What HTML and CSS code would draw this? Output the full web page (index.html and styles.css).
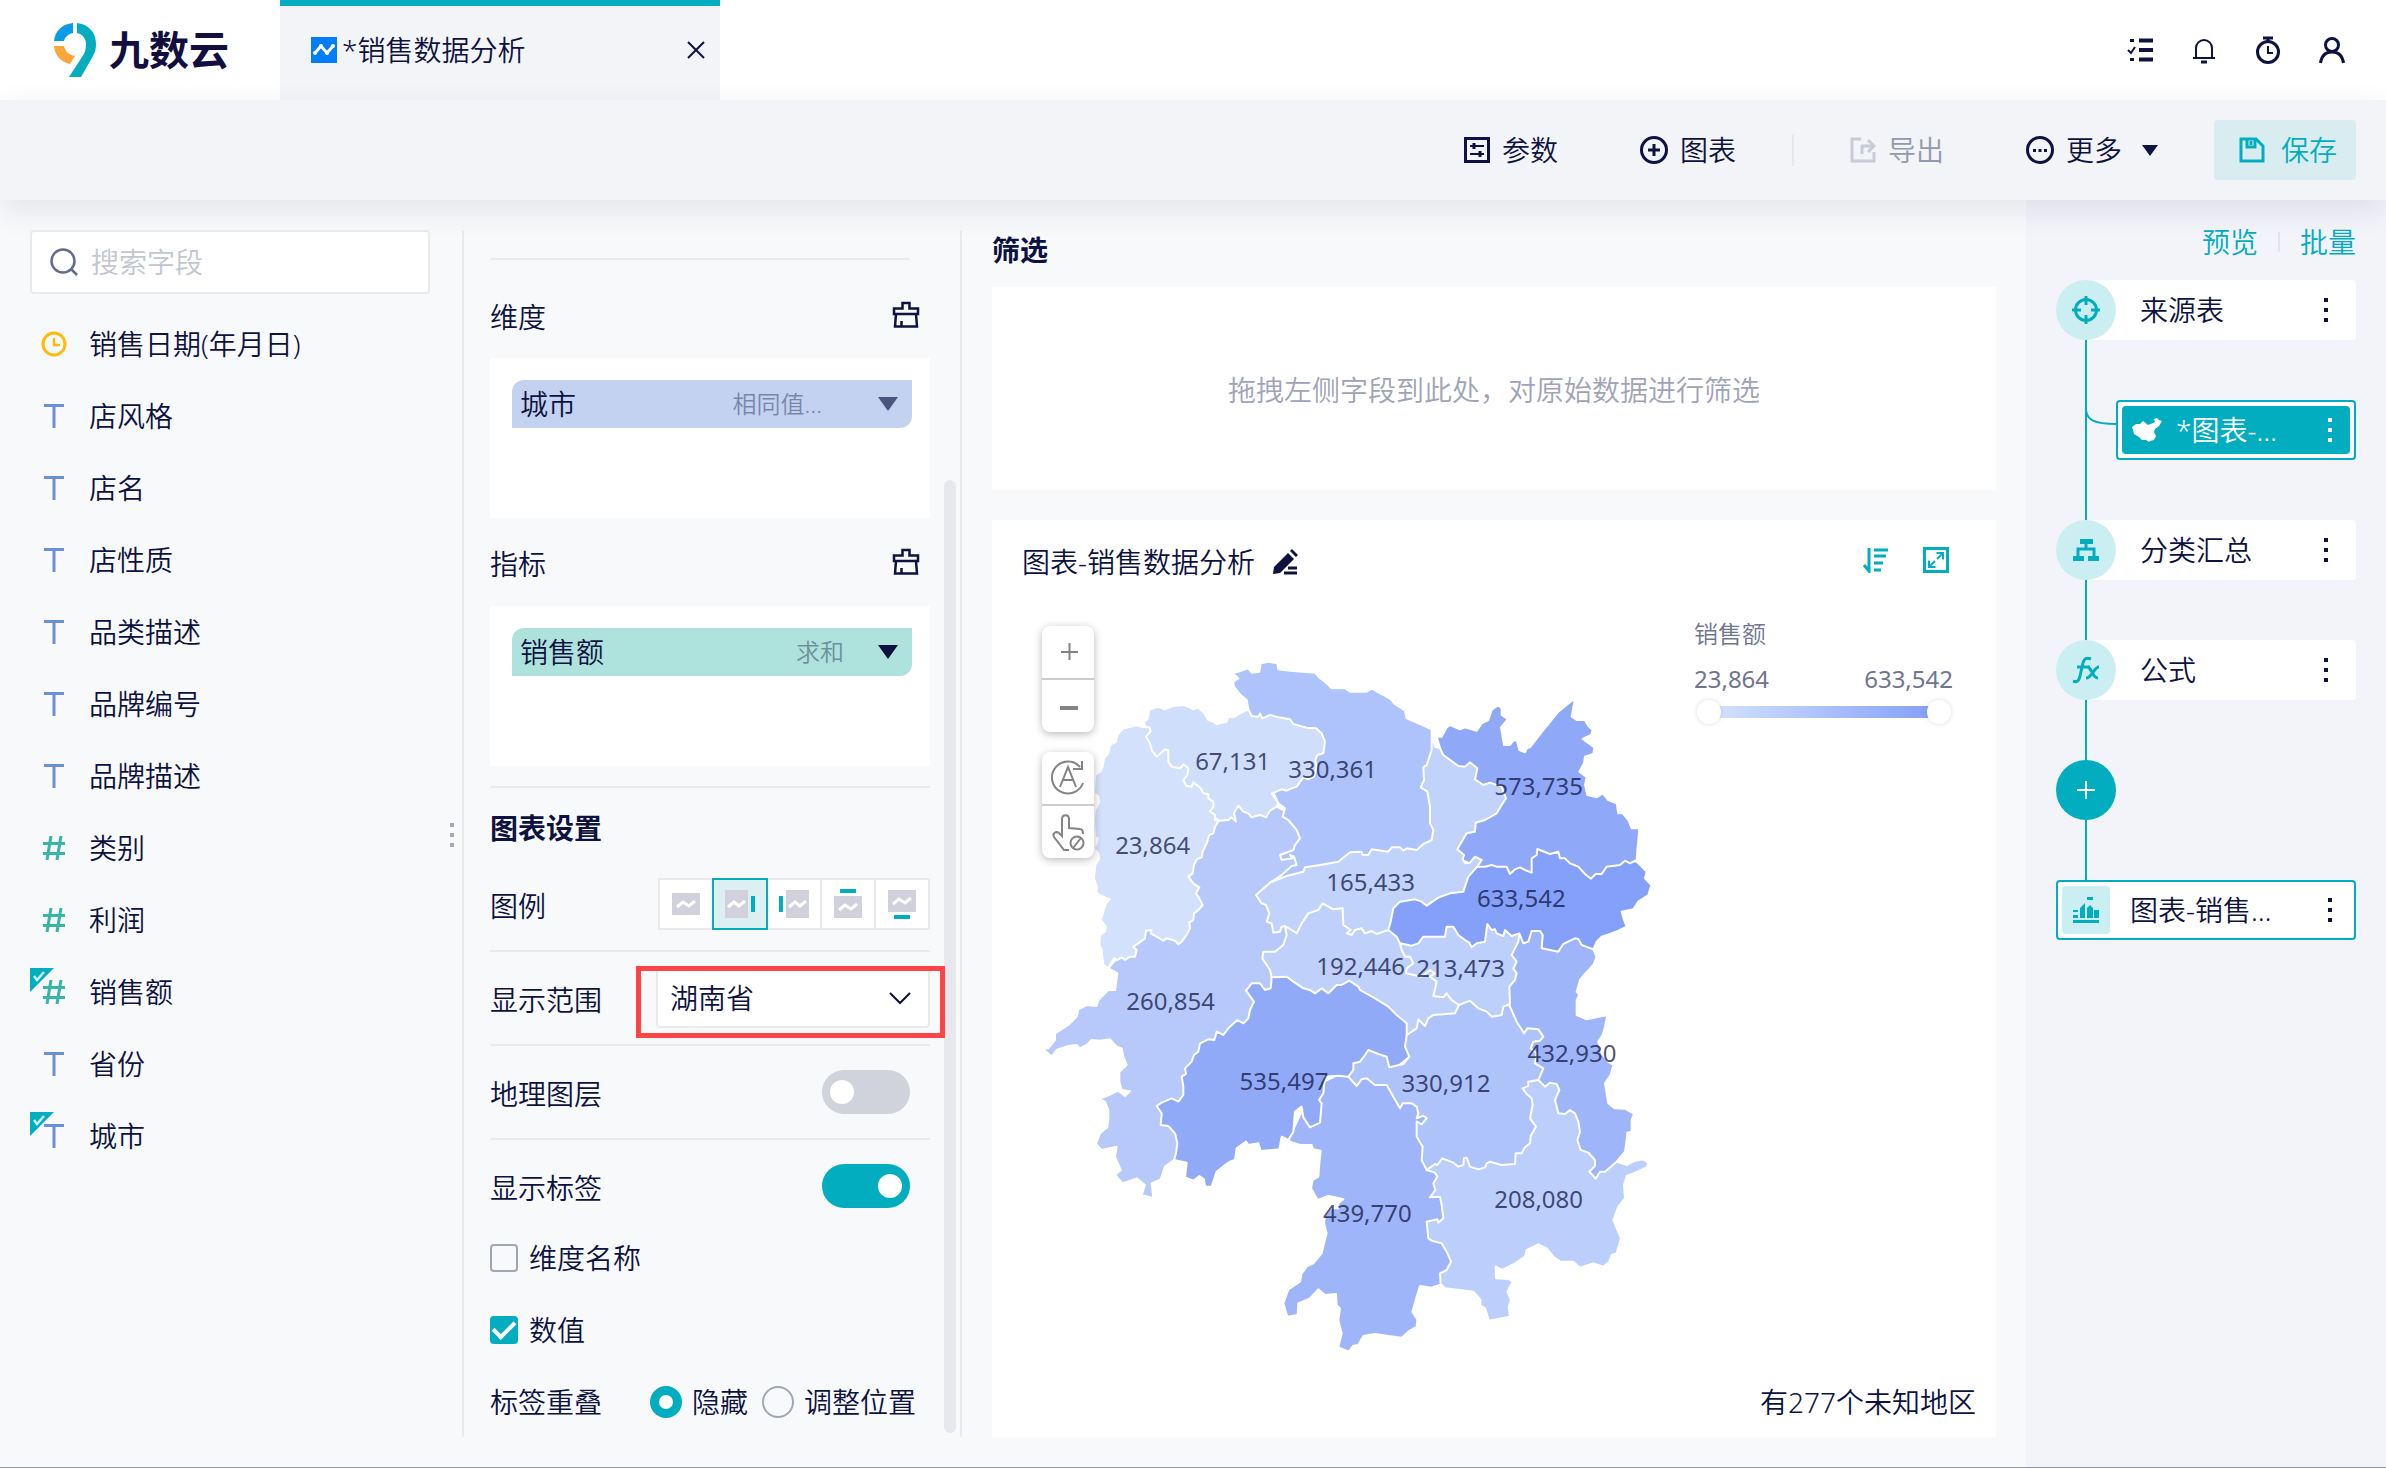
FILE: index.html
```html
<!DOCTYPE html>
<html lang="zh-CN">
<head>
<meta charset="utf-8">
<title>销售数据分析</title>
<link rel="stylesheet" href="styles.css">
</head>
<body>
<header class="topbar">
  <a class="logo" href="#" aria-label="九数云">
    <svg width="44" height="56" viewBox="0 0 44 56" aria-hidden="true">
      <path d="M1 19C2 9 9 2 20 1v10c-5 1-8 4-9 8z" fill="#0a9be6"/>
      <path d="M24 1c11 1 19 9 19 21 0 5-1 8-3 12L28 55H16l13-20c3-4 4-8 4-13 0-6-4-10-9-11z" fill="#02adbf"/>
      <path d="M1 24h10c1 5 5 9 11 10l-5 8C8 40 2 34 1 24z" fill="#fba63a"/>
    </svg>
    <span class="logo-text">九数云</span>
  </a>
  <div class="tab">
    <svg width="26" height="26" viewBox="0 0 26 26" aria-hidden="true"><path d="M0 0h26v26H0z" fill="#027df8"/><path d="M4 16l6-7 6 7 6-7" fill="none" stroke="#fff" stroke-width="3"/><circle cx="4" cy="16" r="2" fill="#fff"/><circle cx="10" cy="9" r="2" fill="#fff"/><circle cx="16" cy="16" r="2" fill="#fff"/><circle cx="22" cy="9" r="2" fill="#fff"/></svg>
    <span class="tab-title">*销售数据分析</span>
    <button class="icon-btn" aria-label="关闭"><svg width="20" height="20" viewBox="0 0 20 20"><path d="M2 2l16 16M18 2L2 18" class="ln"/></svg></button>
  </div>
  <nav class="top-icons">
    <button class="icon-btn" aria-label="任务"><svg width="28" height="28" viewBox="0 0 28 28"><path d="M13 4.500h14M13 14h14M13 23.500h14" class="ln w4"/><path d="M2 14l3 3 4-6" class="ln"/><path d="M4 4.500h4M4 23.500h4" class="ln w3"/></svg></button>
    <button class="icon-btn" aria-label="通知"><svg width="28" height="28" viewBox="0 0 28 28"><path d="M3 22h22M6 22V12a8 8 0 0 1 16 0v10" class="ln"/><path d="M11 26h6" class="ln w3"/></svg></button>
    <button class="icon-btn" aria-label="计时"><svg width="28" height="28" viewBox="0 0 28 28"><circle cx="14" cy="16" r="10.500" class="ln w3"/><path d="M14 10v7h5" class="ln"/><path d="M9 2h10" class="ln w3"/><path d="M14 2v4" class="ln w3"/></svg></button>
    <button class="icon-btn" aria-label="用户"><svg width="28" height="28" viewBox="0 0 28 28"><circle cx="14" cy="9" r="6.500" class="ln w3"/><path d="M2.500 27c1-7 5-11 11.500-11s10.500 4 11.500 11" class="ln w3"/></svg></button>
  </nav>
</header>

<div class="toolbar">
  <button class="tool"><svg width="26" height="26" viewBox="0 0 26 26"><path d="M1.500 1.500h23v23h-23z" class="ln w3"/><path d="M6 9h14M6 17h14" class="ln"/><path d="M10 6v6M16 14v6" class="ln w3"/></svg>参数</button>
  <button class="tool"><svg width="28" height="28" viewBox="0 0 28 28"><circle cx="14" cy="14" r="12.500" class="ln w3"/><path d="M14 8v12M8 14h12" class="ln w3"/></svg>图表</button>
  <span class="tool-sep"></span>
  <button class="tool disabled" disabled><svg width="26" height="26" viewBox="0 0 26 26"><path d="M11 2H2v22h22v-9" class="ln w3 pale"/><path d="M12 17V9h10" class="ln w3 pale"/><path d="M18 3l6 6-6 6" class="ln w3 pale"/></svg>导出</button>
  <button class="tool"><svg width="28" height="28" viewBox="0 0 28 28"><circle cx="14" cy="14" r="12.500" class="ln w3"/><path d="M7 13h3v3H7zM12.500 13h3v3h-3zM18 13h3v3h-3z" fill="#0d1240"/></svg>更多<i class="caret caret-small"></i></button>
  <button class="save"><svg width="26" height="26" viewBox="0 0 26 26"><path d="M2 2h15l7 7v15H2z" class="ln w3 teal"/><path d="M8 2v8h8V2M12 4v4" class="ln w3 teal"/></svg>保存</button>
</div>

<main class="main">
  <section class="fields">
    <label class="search"><svg width="28" height="28" viewBox="0 0 28 28"><circle cx="13" cy="13" r="11.500" fill="none" stroke="#636c8c" stroke-width="2.500"/><path d="M21 21l6 6" stroke="#636c8c" stroke-width="2.500"/></svg><input type="text" placeholder="搜索字段" aria-label="搜索字段"></label>
    <ul class="field-list">
      <li><svg class="f-icon" viewBox="0 0 26 26"><circle cx="13" cy="13" r="11" fill="none" stroke="#ffbb0b" stroke-width="3"/><path d="M13 7v7h6" fill="none" stroke="#ffbb0b" stroke-width="2.500"/></svg>销售日期(年月日)</li>
      <li><svg class="f-icon" viewBox="0 0 26 26"><use href="#text-type"/></svg>店风格</li>
      <li><svg class="f-icon" viewBox="0 0 26 26"><use href="#text-type"/></svg>店名</li>
      <li><svg class="f-icon" viewBox="0 0 26 26"><use href="#text-type"/></svg>店性质</li>
      <li><svg class="f-icon" viewBox="0 0 26 26"><use href="#text-type"/></svg>品类描述</li>
      <li><svg class="f-icon" viewBox="0 0 26 26"><use href="#text-type"/></svg>品牌编号</li>
      <li><svg class="f-icon" viewBox="0 0 26 26"><use href="#text-type"/></svg>品牌描述</li>
      <li><svg class="f-icon" viewBox="0 0 26 26"><use href="#num-type"/></svg>类别</li>
      <li><svg class="f-icon" viewBox="0 0 26 26"><use href="#num-type"/></svg>利润</li>
      <li class="used"><svg class="f-icon" viewBox="0 0 26 26"><use href="#num-type"/></svg>销售额<svg class="flag" viewBox="0 0 24 24"><use href="#used-flag"/></svg></li>
      <li><svg class="f-icon" viewBox="0 0 26 26"><use href="#text-type"/></svg>省份</li>
      <li class="used"><svg class="f-icon" viewBox="0 0 26 26"><use href="#text-type"/></svg>城市<svg class="flag" viewBox="0 0 24 24"><use href="#used-flag"/></svg></li>
    </ul>
    <span class="drag-handle"><i></i><i></i><i></i></span>
  </section>

  <section class="config">
    <hr class="rule first">
    <div class="drop-head"><span>维度</span><button class="icon-btn" aria-label="清空维度"><svg width="28" height="28" viewBox="0 0 28 28"><use href="#brush"/></svg></button></div>
    <div class="drop-box"><div class="pill blue"><span>城市</span><small>相同值…</small><i class="caret"></i></div></div>
    <div class="drop-head"><span>指标</span><button class="icon-btn" aria-label="清空指标"><svg width="28" height="28" viewBox="0 0 28 28"><use href="#brush"/></svg></button></div>
    <div class="drop-box"><div class="pill green"><span>销售额</span><small>求和</small><i class="caret"></i></div></div>
    <hr class="rule">
    <h2 class="config-title">图表设置</h2>
    <div class="setting"><span class="setting-name">图例</span>
      <div class="legend-pos">
        <button aria-label="无图例"><svg width="32" height="30" viewBox="0 0 32 30"><path d="M2 4h28v22H2z" class="thumb"/><path d="M7 18l6-5 6 4 6-5" class="zig"/></svg></button>
        <button class="on" aria-label="右侧"><svg width="32" height="30" viewBox="0 0 32 30"><path d="M1 1h23v28H1z" class="thumb"/><path d="M4 18l6-5 5 4 6-5" class="zig"/><path d="M27 7h4v16h-4z" fill="#02adbf"/></svg></button>
        <button aria-label="左侧"><svg width="32" height="30" viewBox="0 0 32 30"><path d="M8 1h23v28H8z" class="thumb"/><path d="M11 18l6-5 5 4 6-5" class="zig"/><path d="M1 7h4v16H1z" fill="#02adbf"/></svg></button>
        <button aria-label="上方"><svg width="32" height="30" viewBox="0 0 32 30"><path d="M2 7h28v22H2z" class="thumb"/><path d="M7 21l6-5 6 4 6-5" class="zig"/><path d="M8 0h16v4H8z" fill="#02adbf"/></svg></button>
        <button aria-label="下方"><svg width="32" height="30" viewBox="0 0 32 30"><path d="M2 1h28v22H2z" class="thumb"/><path d="M7 15l6-5 6 4 6-5" class="zig"/><path d="M8 26h16v4H8z" fill="#02adbf"/></svg></button>
      </div>
    </div>
    <div class="setting"><label class="setting-name" for="range">显示范围</label>
      <div class="range-wrap"><select id="range"><option>湖南省</option></select><svg class="chevron" width="22" height="14" viewBox="0 0 22 14"><path d="M1 2l10 10L21 2" class="ln"/></svg></div>
    </div>
    <div class="setting"><label class="setting-name" for="geo">地理图层</label><input class="switch" type="checkbox" id="geo"></div>
    <div class="setting last"><label class="setting-name" for="labels">显示标签</label><input class="switch" type="checkbox" id="labels" checked></div>
    <div class="options">
      <label class="option"><input class="tick" type="checkbox">维度名称</label>
      <label class="option"><input class="tick" type="checkbox" checked>数值</label>
      <div class="option overlap"><span class="overlap-name">标签重叠</span><label class="choice"><input class="dot" type="radio" name="overlap" checked>隐藏</label><label class="choice"><input class="dot" type="radio" name="overlap">调整位置</label></div>
    </div>
    <span class="scroll-thumb"></span>
  </section>

  <section class="work">
    <h2 class="work-title">筛选</h2>
    <div class="filter-drop">拖拽左侧字段到此处，对原始数据进行筛选</div>
    <div class="chart-card">
      <div class="chart-head">
        <span>图表-销售数据分析</span>
        <button class="icon-btn" aria-label="重命名"><svg width="28" height="28" viewBox="0 0 28 28"><path d="M3 19L17 5l6 6L9 25 2 26zM19 3l2-2 6 6-2 2z" fill="#0d1240"/><path d="M17 20h9M13 25h13" class="ln w3"/></svg></button>
        <div class="chart-tools">
          <button class="icon-btn" aria-label="排序"><svg width="26" height="26" viewBox="0 0 26 26"><path d="M6 1v23l-5-6" class="ln w3 teal"/><path d="M11 3h14M11 9h12M11 16h9M11 23h7" class="ln w3 teal"/></svg></button>
          <button class="icon-btn" aria-label="全屏"><svg width="26" height="26" viewBox="0 0 26 26"><path d="M1.500 1.500h23v23h-23z" class="ln w3 teal"/><path d="M13.500 6H20v6.500M20 6l-6 6M12.500 20H6v-6.500M6 20l6-6" class="ln teal"/></svg></button>
        </div>
      </div>
      <div class="chart-body">
        <svg class="map" viewBox="0 0 1920 2220" role="img" aria-label="湖南省销售额地图">
          <g stroke="#fff" stroke-width="6" stroke-linejoin="round">
            <path fill="#b6c9fa" d="M235 1044L262 1060 255 1110 235 1110 205 1140 200 1158 170 1155 145 1168 140 1190 115 1215 75 1240 75 1260 55 1285 38 1287 50 1297 65 1310 80 1290 110 1279 140 1275 150 1285 170 1275 185 1260 210 1262 240 1258 260 1280 275 1285 280 1310 290 1335 268 1355 268 1385 275 1410 300 1414 285 1428 265 1412 230 1428 205 1437 225 1445 235 1470 235 1500 232 1522 210 1540 198 1572 215 1590 260 1580 255 1610 272 1650 255 1665 278 1690 320 1675 345 1695 335 1725 370 1735 365 1690 392 1678 405 1640 432 1620 600 1300 800 1100 800 900 820 700 820 600 700 540 560 560 450 800z"/>
            <path fill="#bccefb" d="M1760 1625L1790 1635 1815 1622 1840 1618 1855 1628 1850 1642 1810 1660 1790 1668 1782 1695 1785 1735 1765 1760 1750 1800 1773 1855 1760 1900 1745 1905 1738 1925 1720 1940 1690 1930 1650 1943 1630 1925 1590 1925 1572 1912 1550 1885 1525 1873 1490 1890 1485 1910 1455 1930 1417 1950 1397 1940 1398 1975 1435 1977 1448 1985 1432 2015 1443 2040 1436 2062 1440 2090 1377 2102 1365 2065 1350 2055 1352 2040 1330 2015 1270 2008 1245 2005 1232 1993 1200 1950 1150 1750 1190 1650 1250 1560 1450 1560 1440 1400 1495 1370 1525 1380 1600 1370 1700 1550z"/>
            <path fill="#9fb5fa" d="M775 1560L780 1565 810 1575 845 1575 850 1588 872 1592 868 1630 865 1670 848 1680 843 1705 863 1740 895 1728 915 1732 940 1738 925 1750 925 1765 900 1765 885 1785 882 1810 890 1840 882 1870 875 1900 850 1930 832 1938 815 1960 810 1985 775 2008 760 2050 772 2090 803 2085 805 2050 840 2035 865 2008 885 2025 918 2022 920 2055 930 2065 925 2100 935 2140 925 2182 957 2195 970 2177 985 2175 1000 2148 1035 2142 1075 2148 1115 2153 1135 2135 1160 2120 1162 2098 1147 2075 1160 2030 1170 1998 1205 2003 1232 1993 1230 1960 1250 1950 1263 1925 1250 1895 1235 1870 1205 1862 1195 1855 1190 1805 1222 1798 1225 1808 1240 1795 1235 1755 1230 1730 1200 1732 1216 1710 1210 1690 1222 1670 1215 1658 1190 1650 1220 1500 1190 1450 1100 1380 955 1350 850 1400z"/>
            <path fill="#91aaf8" d="M725 1072L722 1105 705 1110 690 1090 665 1090 648 1112 672 1145 660 1170 655 1195 640 1210 622 1200 595 1225 580 1245 560 1235 553 1260 535 1258 510 1270 505 1295 492 1305 485 1325 465 1345 468 1362 455 1370 460 1400 460 1425 445 1445 425 1435 395 1448 380 1458 395 1480 392 1515 415 1518 435 1540 442 1570 438 1600 432 1620 470 1628 465 1672 490 1682 508 1668 522 1678 525 1700 545 1700 560 1655 585 1635 600 1625 615 1620 620 1585 648 1565 655 1575 685 1570 692 1593 748 1588 755 1550 775 1560 790 1535 795 1475 815 1460 820 1492 840 1522 870 1508 875 1450 867 1440 880 1420 885 1370 925 1367 955 1370 1080 1360 1150 1300 1140 1230 1100 1150 958 1040 760 1040z"/>
            <path fill="#afc3fb" d="M1130 1245L1125 1280 1138 1310 1120 1332 1078 1342 1070 1310 1045 1302 1015 1290 1003 1308 990 1325 970 1330 970 1350 955 1370 980 1398 995 1378 1010 1375 1035 1395 1070 1395 1090 1430 1110 1465 1118 1450 1145 1450 1160 1460 1165 1480 1160 1495 1180 1487 1190 1495 1175 1513 1160 1505 1160 1550 1178 1580 1175 1620 1190 1650 1215 1632 1222 1635 1237 1615 1270 1628 1285 1640 1300 1635 1302 1615 1310 1613 1320 1640 1345 1648 1365 1642 1370 1630 1380 1625 1415 1635 1455 1632 1457 1600 1475 1600 1485 1582 1500 1570 1502 1548 1518 1520 1500 1495 1508 1455 1505 1435 1490 1422 1478 1405 1495 1398 1495 1385 1525 1380 1560 1340 1560 1250 1440 1160 1440 1120 1280 1130 1150 1180z"/>
            <path fill="#9fb5fa" d="M1690 988L1700 1010 1690 1035 1665 1062 1650 1080 1640 1115 1648 1125 1640 1140 1640 1185 1670 1198 1732 1185 1725 1220 1718 1245 1705 1265 1715 1300 1735 1325 1750 1335 1742 1365 1725 1390 1735 1450 1755 1465 1785 1466 1812 1482 1805 1500 1805 1535 1792 1538 1790 1560 1785 1595 1760 1625 1725 1655 1710 1655 1697 1676 1678 1655 1695 1638 1695 1620 1675 1598 1652 1590 1642 1560 1650 1535 1645 1505 1635 1480 1620 1470 1605 1482 1585 1480 1575 1440 1588 1410 1580 1392 1560 1388 1545 1400 1525 1380 1540 1345 1515 1330 1520 1300 1502 1285 1510 1265 1530 1262 1540 1250 1525 1228 1492 1225 1482 1240 1460 1205 1440 1160 1400 1100 1420 940 1500 900 1690 960z"/>
            <path fill="#bdcffb" d="M1468 940L1465 965 1445 1005 1460 1025 1450 1045 1460 1060 1455 1080 1438 1100 1440 1152 1420 1160 1415 1185 1385 1190 1370 1175 1345 1165 1320 1142 1287 1155 1200 1150 1110 1080 1100 1000 1110 940 1250 900 1370 900 1440 910z"/>
            <path fill="#bfd1fb" d="M765 918L770 945 760 975 735 995 700 995 697 1015 720 1050 725 1072 770 1070 790 1085 820 1105 840 1110 855 1120 875 1105 895 1120 920 1095 935 1095 958 1082 985 1100 990 1110 1035 1135 1075 1160 1100 1185 1130 1210 1130 1245 1160 1225 1165 1198 1185 1218 1195 1195 1210 1185 1250 1182 1275 1180 1287 1155 1265 1140 1250 1120 1240 1132 1210 1128 1220 1085 1200 1070 1215 1060 1200 1050 1175 1070 1128 1060 1130 1045 1150 1030 1140 1010 1125 1010 1115 990 1110 970 1080 880 940 820 860 820 790 890z"/>
            <path fill="#84a0f8" d="M1342 740L1522 670 1650 690 1820 725 1850 755 1845 775 1864 795 1855 825 1825 845 1810 868 1775 875 1782 900 1790 920 1765 932 1740 942 1715 950 1700 965 1690 988 1655 975 1645 957 1635 955 1600 972 1585 995 1535 985 1538 945 1530 933 1505 933 1495 965 1480 970 1468 940 1445 948 1425 930 1420 948 1400 940 1395 928 1385 930 1372 912 1365 965 1340 970 1325 982 1318 968 1305 960 1285 945 1270 920 1250 920 1245 950 1180 950 1165 970 1145 977 1110 970 1100 950 1075 930 1060 860 1180 800z"/>
            <path fill="#8fa8f8" d="M1220 350L1235 350 1250 322 1260 315 1290 328 1305 322 1340 332 1355 310 1375 300 1385 270 1405 255 1415 265 1415 285 1430 295 1450 267 1438 292 1413 322 1422 375 1440 375 1450 362 1460 360 1468 390 1485 397 1490 385 1500 382 1540 330 1585 275 1635 235 1625 290 1640 300 1665 300 1675 318 1688 330 1683 345 1658 357 1693 382 1690 402 1665 410 1662 430 1648 455 1670 472 1665 495 1672 525 1700 532 1718 520 1735 540 1760 550 1765 580 1778 580 1795 600 1805 625 1828 625 1825 660 1822 690 1820 720 1800 730 1785 722 1770 735 1730 740 1715 762 1697 762 1683 776 1665 762 1645 740 1620 730 1605 715 1590 715 1585 695 1560 702 1522 687 1520 705 1505 715 1505 758 1485 750 1470 742 1455 748 1440 762 1430 740 1400 740 1385 735 1365 740 1342 740 1250 700 1250 450z"/>
            <path fill="#c1d2fb" d="M1210 358L1215 380 1230 385 1240 405 1285 438 1305 440 1320 427 1342 445 1335 478 1360 495 1380 488 1415 500 1428 535 1415 555 1400 580 1365 600 1337 608 1335 635 1310 640 1282 688 1302 705 1298 718 1305 730 1320 728 1335 710 1355 720 1342 740 1315 770 1308 790 1300 815 1260 820 1225 833 1190 857 1175 845 1155 838 1110 845 1090 865 1082 905 1075 930 1040 942 1025 933 1005 940 995 925 975 930 965 945 950 940 962 930 940 915 938 865 910 868 878 850 865 870 835 880 815 910 800 940 785 930 765 918 755 920 750 935 730 938 725 910 710 905 718 880 708 855 695 850 678 825 720 788 900 700 1150 650 1150 450z"/>
            <path fill="#aec2fb" d="M655 268L650 240 632 225 612 200 610 185 625 175 608 160 635 152 655 145 665 158 688 155 692 130 715 125 742 130 745 148 780 152 855 158 865 170 890 190 905 205 945 205 960 215 1010 215 1025 205 1050 220 1070 230 1085 240 1092 250 1125 272 1130 295 1165 310 1205 328 1205 390 1190 435 1180 442 1182 480 1172 502 1192 515 1200 560 1200 610 1210 630 1205 660 1180 672 1160 690 1130 685 1120 692 1110 682 1085 682 1075 695 1055 692 1025 688 1015 705 998 705 995 695 960 697 925 725 870 735 825 742 820 755 770 768 720 788 755 765 785 738 800 735 792 710 780 705 787 715 755 720 750 705 790 690 795 675 810 655 800 630 775 600 758 590 765 565 745 550 700 450z"/>
            <path fill="#cfdefb" d="M345 318L342 305 352 298 358 270 375 262 390 262 405 268 430 258 460 255 480 262 490 268 505 263 522 278 535 300 550 305 560 313 575 308 590 305 595 290 610 292 630 280 655 268 665 288 685 290 690 280 697 295 720 285 745 292 780 298 790 312 830 323 858 325 875 340 885 365 880 400 862 405 856 420 860 440 852 470 835 478 820 472 800 500 785 505 770 512 755 508 725 520 735 535 745 550 740 560 720 572 708 592 690 585 665 592 655 580 640 575 625 557 612 580 618 605 605 592 595 600 566 602 450 520 335 350z"/>
            <path fill="#d3e1fc" d="M345 322L318 316 295 322 280 325 262 345 258 365 240 375 235 400 222 415 218 440 210 455 195 465 192 520 205 530 208 545 195 570 192 600 195 650 203 655 200 670 190 685 205 700 208 715 196 735 192 775 200 800 200 820 215 828 240 838 228 850 220 875 212 900 228 920 225 935 210 945 208 975 215 990 220 1035 235 1044 252 1015 262 1020 275 1012 285 1020 300 1010 315 1010 320 990 310 980 325 970 345 955 348 932 365 930 362 940 380 950 400 962 410 955 435 962 445 973 455 965 470 945 480 925 478 908 490 900 492 880 505 870 518 855 505 830 498 820 508 802 490 790 475 770 488 760 492 735 500 718 515 712 518 695 530 670 538 645 550 640 555 620 566 602 555 600 555 585 540 575 550 560 550 545 535 535 535 522 520 520 512 505 490 487 485 500 468 497 460 480 472 465 475 445 460 433 450 445 425 440 415 425 415 390 405 388 380 410 365 390 360 370 348 350 362 335 358 322z"/>
          </g>
          <g class="map-labels">
            <text x="608" y="450">67,131</text><text x="908" y="474">330,361</text><text x="1526" y="524">573,735</text>
            <text x="368" y="702">23,864</text><text x="1022" y="812">165,433</text><text x="1474" y="860">633,542</text>
            <text x="992" y="1064">192,446</text><text x="1292" y="1070">213,473</text><text x="422" y="1170">260,854</text>
            <text x="1626" y="1326">432,930</text><text x="762" y="1410">535,497</text><text x="1248" y="1416">330,912</text>
            <text x="1526" y="1764">208,080</text><text x="1012" y="1806">439,770</text>
          </g>
        </svg>
        <div class="map-controls">
          <div class="control-group">
            <button aria-label="放大"><svg width="52" height="52" viewBox="0 0 52 52"><path d="M19 26h17M27.500 17v17" class="gr"/></svg></button>
            <button aria-label="缩小"><svg width="52" height="52" viewBox="0 0 52 52"><path d="M18 28h18" class="gr w4"/></svg></button>
          </div>
          <div class="control-group">
            <button aria-label="还原"><svg width="52" height="52" viewBox="0 0 52 52"><path d="M41 31a16 16 0 1 1-3-16M40 9v8h-9" class="gr"/><path d="M18 35l8-20 8 20M21 28h10" class="gr"/></svg></button>
            <button aria-label="禁用拖拽"><svg width="52" height="52" viewBox="0 0 52 52"><path d="M27 44h-5L12 31c-2-4 2-6 5-4l3 3V13c0-5 7-5 7 0v9l11 1c2 0 3 2 3 5" class="gr"/><circle cx="35" cy="37" r="6.500" class="gr"/><path d="M31 42l8-10" class="gr"/></svg></button>
          </div>
        </div>
        <div class="legend">
          <span class="legend-title">销售额</span>
          <div class="legend-ends"><span>23,864</span><span>633,542</span></div>
          <div class="legend-bar"><i></i><b></b><i></i></div>
        </div>
        <p class="unknown">有277个未知地区</p>
      </div>
    </div>
  </section>

  <aside class="flow">
    <div class="flow-links"><a href="#">预览</a><i></i><a href="#">批量</a></div>
    <ol class="nodes">
      <li class="node"><span class="badge"><svg width="28" height="28" viewBox="0 0 28 28"><circle cx="14" cy="14" r="10.500" class="ln w3 teal"/><path d="M14 0v9M14 19v9M0 14h9M19 14h9" class="ln w3 teal"/></svg></span><span class="name">来源表</span><button class="dots" aria-label="菜单"><i></i><i></i><i></i></button></li>
      <li class="node child"><svg class="branch" width="32" height="30" viewBox="0 0 32 30"><path d="M1 0c1 9 6 14 31 14" class="ln teal"/></svg><div class="fill"><svg class="china" width="30" height="24" viewBox="0 0 30 24"><path d="M0 9l4-3 4 0 3-3 5 4 5-2 2-1-1-3 3-1 2 2 3 1-3 5-4 3-1 3 2 4-2 4-4 1-1 1-3-2-4 0-3-3-5-3-1-4z" fill="#fff"/></svg><span class="name">*图表-…</span><button class="dots" aria-label="菜单"><i></i><i></i><i></i></button></div></li>
      <li class="node"><span class="badge"><svg width="28" height="28" viewBox="0 0 28 28"><path d="M8 3h13v5H8zM1 20h11v5H1zM16 20h11v5H16z" fill="#02adbf"/><path d="M14 7v6M6 21v-8h16v8" class="ln w3 teal"/></svg></span><span class="name">分类汇总</span><button class="dots" aria-label="菜单"><i></i><i></i><i></i></button></li>
      <li class="node"><span class="badge"><svg width="28" height="28" viewBox="0 0 28 28"><path d="M1 25c5 2 6-1 7-5l3-13c1-4 3-6 8-4M5 11h13M15 11c5 0 5 11 11 11M27 11c-5 0-7 11-13 11" class="ln w3 teal"/></svg></span><span class="name">公式</span><button class="dots" aria-label="菜单"><i></i><i></i><i></i></button></li>
      <li class="node bare"><button class="add" aria-label="添加步骤"><svg width="18" height="18" viewBox="0 0 18 18"><path d="M9 0v18M0 9h18" stroke="#fff" stroke-width="2"/></svg></button></li>
      <li class="node final"><span class="chart-badge"><svg width="28" height="28" viewBox="0 0 28 28"><path d="M1 24h26v3H1zM1 19h5v3H1zM8 12l5-5v15H8zM15 12l3-3 3 3v10h-6zM22 14h5v8h-5zM15 1h6v3h-6zM1 14h5v2H1z" fill="#02adbf"/></svg></span><span class="name">图表-销售…</span><button class="dots" aria-label="菜单"><i></i><i></i><i></i></button></li>
    </ol>
  </aside>
</main>

<svg class="defs" width="0" height="0" aria-hidden="true">
  <defs>
    <g id="text-type" fill="none" stroke="#6a90dc" stroke-width="3"><path d="M3 2.500h20M13 2.500V25"/></g>
    <g id="num-type" fill="none" stroke="#38b5a5" stroke-width="3"><path d="M2 8.500h22M2 18.500h22M10 1L6 25M20 1l-4 24"/></g>
    <g id="used-flag"><path d="M0 0h24L0 24z" fill="#02adbf"/><path d="M4 8l3 4 7-8" fill="none" stroke="#c9eef1" stroke-width="2.500"/></g>
    <g id="brush" fill="none" stroke="#0d1240" stroke-width="2.500"><path d="M2 13V7.500h8.500V2h7v5.500H26V13zM4 13L3 25.500h22L24 13M9.500 25v-5"/></g>
  </defs>
</svg>
</body>
</html>
```
FILE: styles.css
```css
* { box-sizing: border-box; }

body {
  margin: 0;
  min-height: 100vh;
  display: flex;
  flex-direction: column;
  background: #f7f9fb;
  border-bottom: 1px solid #97999e;
  color: #0d1240;
  font: 350 28px/40px "Noto Sans", "Noto Sans CJK SC", sans-serif;
}

button, input, select { font: inherit; color: inherit; }
button { border: 0; padding: 0; background: none; }
svg { display: block; flex: none; }
ul, ol { list-style: none; margin: 0; padding: 0; }
h2, p { margin: 0; font-size: 28px; }
a { color: #02adbf; text-decoration: none; }
.defs { position: absolute; }

.ln { fill: none; stroke: #0d1240; stroke-width: 2; }
.w3 { stroke-width: 3; }
.pale { stroke: #c8cad6; }
.teal { stroke: #02adbf; }
.gr { fill: none; stroke: #858282; stroke-width: 2; }
.w4 { stroke-width: 4; }

.caret {
  flex: none;
  border: 10px solid transparent;
  border-top: 14px solid #0d1240;
  border-bottom: 0;
}
.caret-small { border-width: 11px 8px 0; margin-left: 8px; }

/* header */
.topbar { display: flex; height: 100px; background: #fff; }
.logo {
  width: 280px;
  padding-left: 53px;
  display: flex;
  align-items: center;
  gap: 12px;
  color: #120f40;
}
.logo-text { font-size: 40px; font-weight: 700; }
.tab {
  width: 440px;
  padding: 0 14px 6px 31px;
  display: flex;
  align-items: center;
  gap: 5px;
  border-top: 6px solid #02adbf;
  background: #f3f4f8;
}
.tab-title { flex: 1; }
.top-icons {
  margin-left: auto;
  padding-right: 40px;
  display: flex;
  align-items: center;
  gap: 36px;
}

/* toolbar */
.toolbar {
  height: 100px;
  padding-right: 30px;
  display: flex;
  align-items: center;
  justify-content: flex-end;
  gap: 30px;
  background: #f3f4f8;
  box-shadow: 0 10px 30px rgba(20, 25, 60, .09);
  position: relative;
}
.tool { display: flex; align-items: center; gap: 12px; padding: 0 26px; }
.disabled { color: #9299ae; }
.tool-sep { width: 2px; height: 32px; background: #e6e8ee; }
.save {
  height: 60px;
  padding: 0 19px 0 25px;
  display: flex;
  align-items: center;
  gap: 16px;
  border-radius: 4px;
  background: #d9edf0;
  color: #02adbf;
}

.main {
  flex: 1;
  display: grid;
  grid-template-columns: 462px 500px minmax(0, 1fr) 360px;
}

/* fields */
.fields { position: relative; padding: 30px 32px 30px 30px; }
.search {
  height: 64px;
  padding: 0 18px;
  display: flex;
  align-items: center;
  gap: 13px;
  border: 2px solid #e8eaed;
  border-radius: 4px;
  background: #fff;
}
.search input { flex: 1; min-width: 0; border: 0; padding: 0; outline: 0; background: none; }
.search input::placeholder { color: #c2c6d2; opacity: 1; }
.field-list { padding-top: 14px; }
.field-list li {
  position: relative;
  height: 72px;
  padding-left: 11px;
  display: flex;
  align-items: center;
  gap: 22px;
}
.f-icon { width: 26px; height: 26px; }
.flag { position: absolute; left: 0; top: 12px; width: 24px; height: 24px; }
.drag-handle {
  position: absolute;
  right: 8px;
  top: 623px;
  display: grid;
  gap: 6px;
}
.drag-handle i { width: 4px; height: 4px; background: #a3a7b8; }

/* configuration */
.config {
  position: relative;
  margin: 30px 0;
  padding: 28px 30px 0 26px;
  border: solid #e8eaed;
  border-width: 0 2px;
}
.rule { height: 2px; margin: 20px 0 0; border: 0; background: #e8eaed; }
.rule.first { margin: 0 20px 12px 0; }
.drop-head {
  height: 88px;
  padding-right: 10px;
  display: flex;
  align-items: center;
  justify-content: space-between;
}
.rule.first + .drop-head { height: 86px; }
.drop-head span, .setting-name { padding-top: 4px; }
.drop-box { height: 160px; padding: 22px 18px 0 22px; background: #fff; }
.pill {
  height: 48px;
  padding: 0 14px 0 8px;
  display: flex;
  align-items: center;
  border-radius: 12px 0;
}
.pill span { flex: 1; }
.pill small { font-size: 24px; opacity: .4; }
.pill .caret { margin-left: 34px; }
.blue { background: #c3d2f0; }
.blue .caret { margin-left: 56px; opacity: .65; }
.green { background: #aee2dd; }
.config-title { height: 70px; padding-top: 20px; font-weight: 700; }
.setting {
  height: 94px;
  display: flex;
  align-items: center;
  justify-content: space-between;
  border-bottom: 2px solid #e8eaed;
}
.setting.last { border: 0; height: 92px; }
.legend-pos { display: flex; border: 2px solid #e8eaed; background: #fff; }
.legend-pos button {
  width: 54px;
  height: 48px;
  display: grid;
  place-items: center;
  border-left: 2px solid #e8eaed;
}
.legend-pos button:first-child { border-left: 0; width: 52px; }
.legend-pos .on {
  position: relative;
  z-index: 1;
  height: 52px;
  width: 56px;
  margin: -2px -2px -2px 0;
  border: 2px solid #02adbf;
  background: #dcf0f4;
}
.thumb { fill: #d0d1dc; }
.zig { fill: none; stroke: #fff; stroke-width: 3; }
.range-wrap { position: relative; width: 274px; height: 60px; }
.range-wrap::after {
  content: "";
  position: absolute;
  inset: -2px -15px -10px -20px;
  border: 5px solid #fe4444;
  pointer-events: none;
  z-index: 1;
}
.range-wrap select {
  width: 100%;
  height: 100%;
  padding: 0 12px;
  appearance: none;
  border: 2px solid #e8eaed;
  border-radius: 4px;
  background: #fff;
}
.chevron { position: absolute; right: 19px; top: 23px; }
.switch {
  appearance: none;
  width: 88px;
  height: 44px;
  margin: 0 20px 0 0;
  padding: 10px 8px;
  display: flex;
  border-radius: 22px;
  background: #d0d2dc;
}
.switch::before { content: ""; width: 24px; height: 24px; border-radius: 50%; background: #fff; }
.switch:checked { justify-content: flex-end; background: #02adbf; }
.options { display: grid; gap: 20px; }
.option { height: 52px; display: flex; align-items: center; gap: 11px; }
.tick {
  appearance: none;
  width: 28px;
  height: 28px;
  margin: 0;
  display: grid;
  place-items: center;
  border: 2px solid #a0a6b4;
  border-radius: 4px;
}
.tick:checked { border-color: #02adbf; background: #02adbf; }
.tick:checked::before {
  content: "";
  width: 18px;
  height: 9px;
  margin-bottom: 5px;
  border: solid #fff;
  border-width: 0 0 4px 4px;
  transform: rotate(-45deg);
}
.overlap { gap: 14px; }
.overlap-name { width: 146px; }
.choice { display: flex; align-items: center; gap: 10px; }
.dot {
  appearance: none;
  width: 32px;
  height: 32px;
  margin: 0;
  border: 2px solid #a0a6b4;
  border-radius: 50%;
}
.dot:checked { border: 9px solid #02adbf; background: #fff; }
.scroll-thumb {
  position: absolute;
  right: 4px;
  top: 250px;
  bottom: 4px;
  width: 12px;
  border-radius: 6px;
  background: #e6e8ed;
}

/* work area */
.work { padding: 30px; display: flex; flex-direction: column; }
.work-title { height: 57px; font-weight: 700; }
.filter-drop {
  height: 203px;
  margin-bottom: 30px;
  padding-top: 2px;
  display: grid;
  place-items: center;
  background: #fff;
  color: #9fa3b8;
}
.chart-card { flex: 1; display: flex; flex-direction: column; background: #fff; }
.chart-head {
  height: 84px;
  padding: 0 47px 0 30px;
  display: flex;
  align-items: center;
  gap: 16px;
}
.chart-tools { margin-left: auto; display: flex; gap: 34px; padding-bottom: 4px; }
.chart-body {
  position: relative;
  flex: 1;
  padding: 16px 42px 0 38px;
  display: flex;
  align-items: flex-start;
  justify-content: space-between;
}
.map { width: 640px; height: 740px; overflow: visible; }
.map-labels {
  font-size: 72px;
  font-weight: 400;
  text-anchor: middle;
  fill: #0d1240;
  fill-opacity: .74;
}
.map-controls { position: absolute; left: 50px; top: 22px; display: grid; gap: 20px; }
.control-group {
  border-radius: 8px;
  background: #fff;
  box-shadow: 0 2px 8px rgba(0, 0, 0, .28);
}
.control-group button { display: block; height: 52px; }
.control-group button + button { border-top: 2px solid #ccc; height: 54px; }
.legend { width: 260px; padding-right: 1px; font-size: 24px; line-height: 32px; color: #6f7590; }
.legend-title { display: block; height: 43px; line-height: 28px; }
.legend-ends { display: flex; justify-content: space-between; font-weight: 400; }
.legend-bar { display: flex; align-items: center; margin: 5px 2px 0 3px; }
.legend-bar i {
  width: 24px;
  height: 24px;
  border-radius: 50%;
  background: #fff;
  box-shadow: 0 0 4px rgba(90, 110, 170, .25);
  z-index: 1;
}
.legend-bar b { flex: 1; height: 12px; margin: 0 -4px; background: linear-gradient(90deg, #d3e1fc, #84a0f8); }
.unknown { position: absolute; right: 20px; bottom: 15px; }

/* flow panel */
.flow { padding: 22px 30px; background: #f3f4f9; }
.flow-links { display: flex; justify-content: flex-end; align-items: center; gap: 20px; height: 40px; }
.flow-links i { width: 2px; height: 20px; background: #e3e5ec; }
.nodes { position: relative; margin-top: 18px; display: grid; gap: 60px; }
.nodes::before {
  content: "";
  position: absolute;
  left: 29px;
  top: 30px;
  bottom: 30px;
  width: 2px;
  background: #02adbf;
}
.node {
  position: relative;
  height: 60px;
  padding-right: 20px;
  display: flex;
  align-items: center;
  border-radius: 4px;
  background: linear-gradient(90deg, transparent 30px, #fff 30px);
}
.name { flex: 1; padding-left: 24px; }
.badge, .add {
  width: 60px;
  height: 60px;
  display: grid;
  place-items: center;
  border-radius: 50%;
  background: #cbeef2;
}
.dots { width: 20px; display: grid; justify-items: center; gap: 6px; }
.dots i { width: 4px; height: 4px; background: #0d1240; }
.child {
  margin-left: 60px;
  padding: 4px;
  border: 2px solid #02adbf;
  background: #fff;
}
.branch { position: absolute; left: -33px; top: 8px; }
.fill {
  flex: 1;
  height: 48px;
  padding: 0 10px;
  display: flex;
  align-items: center;
  border-radius: 4px;
  background: #02adbf;
  color: #fff;
}
.fill .name { padding-left: 14px; }
.fill .dots i { background: #fff; }
.bare { background: none; }
.add { background: #02adbf; }
.final { padding: 4px 14px 4px 4px; border: 2px solid #02adbf; background: #fff; }
.final .name { padding-left: 20px; }
.chart-badge {
  width: 48px;
  height: 48px;
  display: grid;
  place-items: center;
  border-radius: 4px;
  background: #cbeef2;
}
```
